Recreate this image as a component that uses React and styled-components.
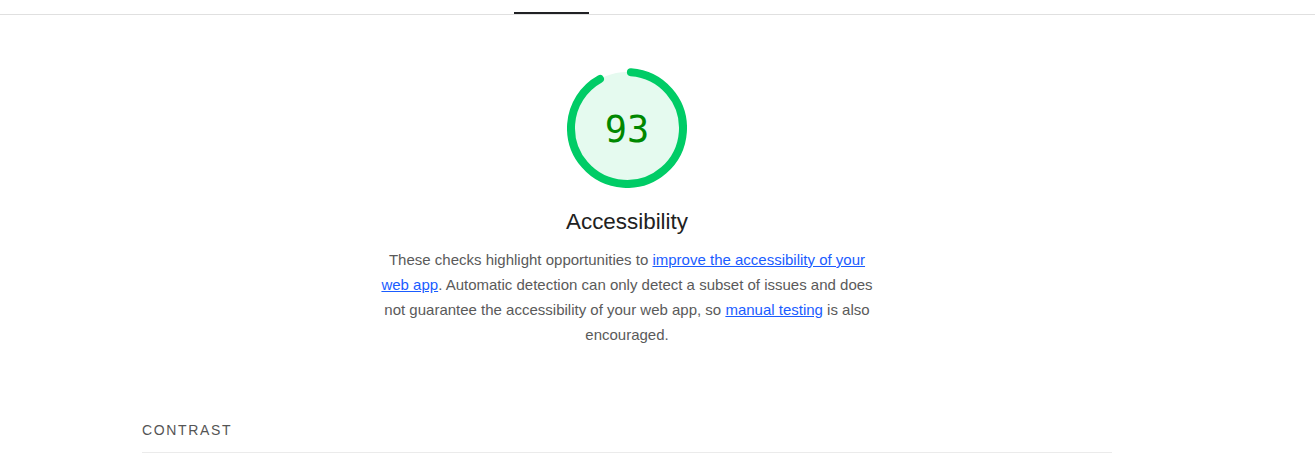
import React from "react";
import styled, { createGlobalStyle } from "styled-components";

const GlobalStyle = createGlobalStyle`
  html, body {
    margin: 0;
    padding: 0;
    background: #ffffff;
    font-family: "Liberation Sans", Arial, sans-serif;
  }
`;

const Page = styled.div`
  width: 1315px;
  height: 453px;
  overflow: hidden;
  background: #fff;
`;

const TabList = styled.div`
  display: flex;
  height: 14px;
  padding-left: 144px;
  border-bottom: 1px solid #e0e0e0;
`;

const Tab = styled.div`
  width: ${(p) => (p.$active ? "75px" : "74px")};
  height: 14px;
  box-sizing: border-box;
  border-bottom: 2px solid ${(p) => (p.$active ? "#202124" : "transparent")};
  margin-bottom: ${(p) => (p.$active ? "-1px" : "0")};
`;

const Content = styled.div`
  width: 970px;
  margin-left: 142px;
`;

const Header = styled.div`
  display: flex;
  flex-direction: column;
  align-items: center;
  padding-top: 53px;
`;

const GaugeWrap = styled.div`
  position: relative;
  width: 120px;
  height: 120px;
`;

const GaugeValue = styled.div`
  position: absolute;
  inset: 0;
  display: flex;
  align-items: center;
  justify-content: center;
  font-family: "DejaVu Sans Mono", "Liberation Mono", monospace;
  font-size: 37px;
  color: #008800;
  padding-top: 3px;
`;

const Title = styled.h1`
  margin: 20px 0 0;
  font-size: 22.4px;
  font-weight: 400;
  line-height: 28px;
  color: #212121;
`;

const Description = styled.p`
  margin: 11px 0 0;
  max-width: 494px;
  font-size: 15px;
  line-height: 25px;
  color: #5a5a5a;
  text-align: center;
`;

const Link = styled.a`
  color: #1a5cff;
  text-decoration: underline;
`;

const GroupHeader = styled.div`
  margin-top: 74px;
  padding-bottom: 13px;
  border-bottom: 1px solid #ebebeb;
  font-size: 14px;
  line-height: 18px;
  letter-spacing: 1.65px;
  text-transform: uppercase;
  color: #555555;
`;

const Gauge = ({ score }) => {
  const r = 56;
  const c = 2 * Math.PI * r;
  const filled = (score / 100) * c;
  return (
    <GaugeWrap>
      <svg width="120" height="120" viewBox="0 0 120 120">
        <circle cx="60" cy="60" r={r} fill="#e5faef" stroke="none" />
        <circle
          cx="60"
          cy="60"
          r={r}
          fill="none"
          stroke="#00cc66"
          strokeWidth="8"
          strokeLinecap="round"
          strokeDasharray={`${filled - 8} ${c}`}
          transform="rotate(-86 60 60)"
        />
      </svg>
      <GaugeValue>{score}</GaugeValue>
    </GaugeWrap>
  );
};

export default function App() {
  return (
    <Page>
      <GlobalStyle />
      <TabList>
        <Tab />
        <Tab />
        <Tab />
        <Tab />
        <Tab />
        <Tab $active />
      </TabList>
      <Content>
        <Header>
          <Gauge score={93} />
          <Title>Accessibility</Title>
          <Description>
            These checks highlight opportunities to{" "}
            <Link href="#">improve the accessibility of your web app</Link>.
            Automatic detection can only detect a subset of issues and does not
            guarantee the accessibility of your web app, so{" "}
            <Link href="#">manual testing</Link> is also encouraged.
          </Description>
        </Header>
        <GroupHeader>Contrast</GroupHeader>
      </Content>
    </Page>
  );
}
